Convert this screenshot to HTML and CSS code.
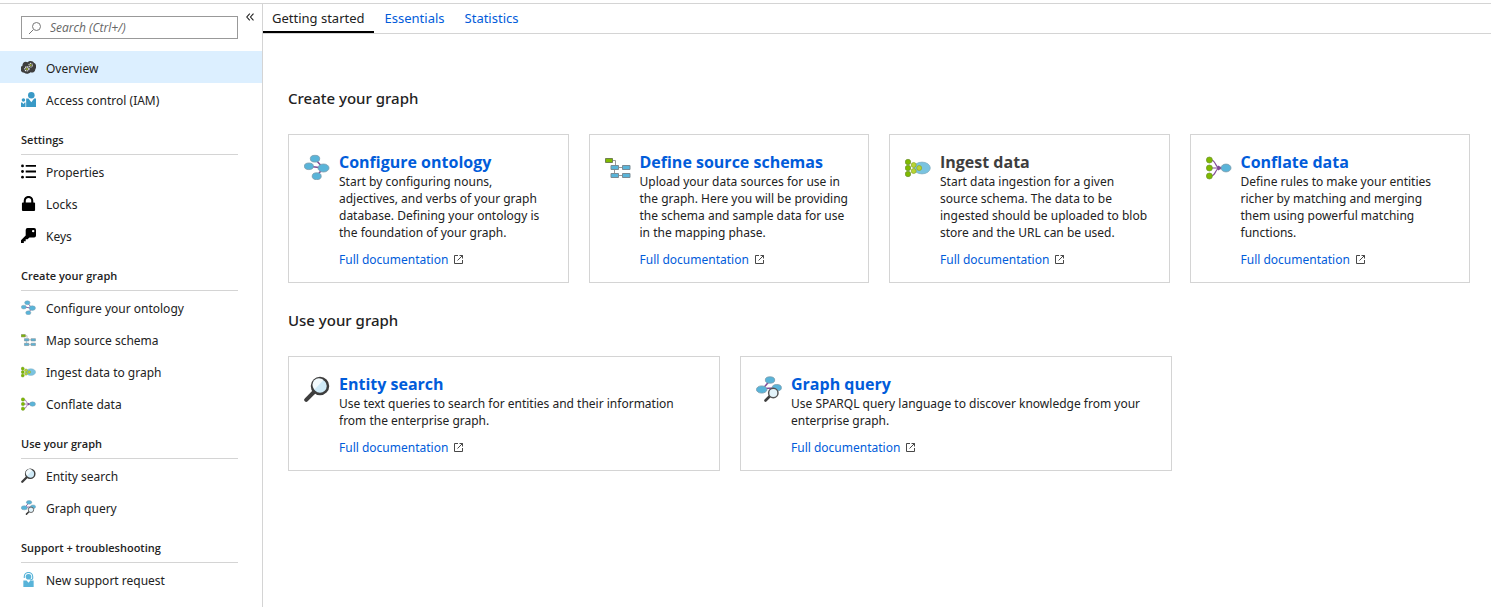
FILE: index.html
```html
<!DOCTYPE html>
<html lang="en">
<head>
<meta charset="utf-8">
<title>Getting started</title>
<link rel="stylesheet" href="styles.css">
</head>
<body>
<svg class="sprite" aria-hidden="true">
  <symbol id="ontology" viewBox="0 0 26 26">
    <path d="M11 5 19.300 14 12.700 22M5 12.300 19 14" fill="none" stroke="#804998" stroke-width="1.500"/>
    <g fill="#59b4d9" stroke="#7a9bab" stroke-width=".8"><ellipse cx="11" cy="4.700" rx="4.700" ry="3.400"/><ellipse cx="4.900" cy="12.300" rx="4.500" ry="3.300"/><ellipse cx="19.500" cy="14" rx="5.500" ry="4"/><ellipse cx="12.700" cy="22.200" rx="4.500" ry="3.400"/></g>
  </symbol>
  <symbol id="schema" viewBox="0 0 26 26">
    <path d="M8 6.500h2.500V11M9.500 16v3M13 13.500h5M13 21.500h5" fill="none" stroke="#999"/>
    <path d="M.5 4.500h7v4h-7z" fill="#7fba00" stroke="#708050"/>
    <path d="M6 11.500h7.500v4H6zM17.500 11.500H25v4h-7.500zM6 19.500h7.500v4H6zM17.500 19.500H25v4h-7.500z" fill="#59b4d9" stroke="#7a8b94"/>
  </symbol>
  <symbol id="ingest" viewBox="0 0 26 26">
    <ellipse cx="17" cy="14" rx="8.300" ry="5.900" fill="#79c3e0" stroke="#7daabf" stroke-width=".7"/>
    <g fill="#b8d432" stroke="#8aa62c" stroke-width=".7"><circle cx="8.700" cy="11" r="2.500"/><circle cx="8.700" cy="17" r="2.500"/><circle cx="14.200" cy="14" r="2.500"/></g>
    <g fill="#7fba00" stroke="#6d9230" stroke-width=".7"><circle cx="3" cy="8" r="2.700"/><circle cx="3" cy="14" r="2.700"/><circle cx="3" cy="20" r="2.700"/></g>
  </symbol>
  <symbol id="conflate" viewBox="0 0 26 26">
    <path d="M5 6c5 0 4 8 9 8M5 22c5 0 4-8 9-8M5 14h11" fill="none" stroke="#804998" stroke-width="1.200"/>
    <path d="M12 11.500 17 14l-5 2.500z" fill="#804998"/>
    <ellipse cx="20" cy="14" rx="5" ry="3.900" fill="#59b4d9" stroke="#7a9bab" stroke-width=".8"/>
    <g fill="#7fba00" stroke="#6d9230" stroke-width=".7"><circle cx="3.400" cy="6" r="3"/><circle cx="3.400" cy="14" r="3"/><circle cx="3.400" cy="22" r="3"/></g>
  </symbol>
  <symbol id="lens" viewBox="0 0 26 26">
    <path d="M2.200 23.800 10 16" stroke="#3e3e3e" stroke-width="4" stroke-linecap="round"/>
    <circle cx="16" cy="10" r="8" fill="#cfeaf7" stroke="#3e3e3e" stroke-width="2.500"/>
    <path d="M10.500 13.500a6.500 6.500 0 0 1 9-9.500z" fill="#f2fafd"/>
  </symbol>
  <symbol id="query" viewBox="0 0 26 26">
    <path d="M14 4.500 7 12.500 20 12" fill="none" stroke="#804998" stroke-width="1.500"/>
    <g fill="#59b4d9" stroke="#7a9bab" stroke-width=".8"><ellipse cx="14" cy="4" rx="4.700" ry="3.200"/><ellipse cx="5.700" cy="13.500" rx="5.300" ry="3.600"/><ellipse cx="20.800" cy="11.700" rx="4.600" ry="3.200"/></g>
    <path d="m9.500 24.500 4.500-4.500" stroke="#3e3e3e" stroke-width="2.600" stroke-linecap="round"/>
    <circle cx="17.300" cy="17" r="4.700" fill="#e3f3fa" stroke="#555" stroke-width="1.500"/>
  </symbol>
  <symbol id="overview" viewBox="0 0 16 16">
    <path d="M3.500 13.500A4 4 0 0 1 1.500 6C1.500 2.500 4.500 1 7 2.500c2-2.300 6-1.800 7 .7 2.500.8 2.800 4.800 1.200 6.800-.3 3-3 4-5.200 3-1.500 2-5 2-6.500.5z" fill="#3e3e3e"/>
    <circle cx="10.300" cy="5.500" r="1.900" fill="none" stroke="#e4e4e4" stroke-width="1.100" stroke-dasharray="1.200 .6"/><circle cx="6.300" cy="9.500" r="2.200" fill="none" stroke="#fff" stroke-width="1.200" stroke-dasharray="1.300 .6"/>
    <circle cx="10.300" cy="5.500" r="1" fill="#98ac2b"/><circle cx="6.300" cy="9.500" r="1.100" fill="#98ac2b"/>
  </symbol>
  <symbol id="people" viewBox="0 0 16 16">
    <g fill="#3999c6"><circle cx="11" cy="3.500" r="3.500"/><path d="M5.500 7H8l3 4 3-4h2v9H5.500z"/><circle cx="2.600" cy="8.500" r="1.900"/><path d="M0 11.200h1.300l1.300 1.500 1.300-1.500h.9V16H0z"/></g>
  </symbol>
  <symbol id="list" viewBox="0 0 16 16">
    <path d="M5 2h11M5 8h11M5 14h11" stroke="#000" stroke-width="2"/><circle cx="1.600" cy="2" r="1.500"/><circle cx="1.600" cy="8" r="1.500"/><circle cx="1.600" cy="14" r="1.500"/>
  </symbol>
  <symbol id="lock" viewBox="0 0 16 16">
    <path d="M4 8V5a4 4 0 0 1 8 0v3" fill="none" stroke="#000" stroke-width="2.200"/><rect x="1" y="7" width="14" height="9" rx="1"/>
  </symbol>
  <symbol id="key" viewBox="0 0 16 16">
    <path fill-rule="evenodd" d="M7 0h7a2 2 0 0 1 2 2v6a2 2 0 0 1-2 2H9l-2 2H5v2H3v2H0v-3l5-5V2a2 2 0 0 1 2-2zm6 2a1.300 1.300 0 1 0 0 2.600A1.300 1.300 0 0 0 13 2z"/>
  </symbol>
  <symbol id="support" viewBox="0 0 16 16">
    <path d="M3.500 6.500V5A4.500 4.500 0 0 1 12.500 5v1.500c0 1-1 2-3 2" fill="none" stroke="#59b4d9" stroke-width="1.200"/>
    <circle cx="8" cy="5" r="3" fill="#59b4d9"/><path d="M2.500 9H6l2 2.500L10 9h3.500v7h-11z" fill="#59b4d9"/>
  </symbol>
  <symbol id="external" viewBox="0 0 9 9">
    <path d="M4 .5H.5v8h8V5M5.500 .5h3v3M8.500.5l-5 5" fill="none" stroke="#333" stroke-width=".9"/>
  </symbol>
</svg>
<div class="app">
  <aside class="sidebar">
    <div class="search-row">
      <label class="search">
        <svg class="search-icon" viewBox="0 0 14 14" aria-hidden="true"><path d="M1 13 5 9" stroke="#777"/><circle cx="8.500" cy="5.500" r="4" fill="none" stroke="#777"/></svg>
        <input class="search-input" type="text" placeholder="Search (Ctrl+/)" aria-label="Search">
      </label>
      <button class="collapse" type="button" aria-label="Collapse menu"><svg class="chevrons" viewBox="0 0 8 8" aria-hidden="true"><path d="M3.800.7.800 4l3 3.300M7.500.7 4.500 4l3 3.300" fill="none" stroke="#222" stroke-width="1.100"/></svg></button>
    </div>
    <nav>
      <a class="item selected" href="#"><svg class="icon"><use href="#overview"/></svg>Overview</a>
      <a class="item" href="#"><svg class="icon"><use href="#people"/></svg>Access control (IAM)</a>
      <h2 class="group">Settings</h2>
      <a class="item" href="#"><svg class="icon"><use href="#list"/></svg>Properties</a>
      <a class="item" href="#"><svg class="icon"><use href="#lock"/></svg>Locks</a>
      <a class="item" href="#"><svg class="icon"><use href="#key"/></svg>Keys</a>
      <h2 class="group">Create your graph</h2>
      <a class="item" href="#"><svg class="icon"><use href="#ontology"/></svg>Configure your ontology</a>
      <a class="item" href="#"><svg class="icon"><use href="#schema"/></svg>Map source schema</a>
      <a class="item" href="#"><svg class="icon"><use href="#ingest"/></svg>Ingest data to graph</a>
      <a class="item" href="#"><svg class="icon"><use href="#conflate"/></svg>Conflate data</a>
      <h2 class="group">Use your graph</h2>
      <a class="item" href="#"><svg class="icon"><use href="#lens"/></svg>Entity search</a>
      <a class="item" href="#"><svg class="icon"><use href="#query"/></svg>Graph query</a>
      <h2 class="group">Support + troubleshooting</h2>
      <a class="item" href="#"><svg class="icon"><use href="#support"/></svg>New support request</a>
    </nav>
  </aside>
  <main class="main">
    <div class="tabs">
      <button class="tab active" type="button">Getting started</button>
      <button class="tab" type="button">Essentials</button>
      <button class="tab" type="button">Statistics</button>
    </div>
    <div class="content">
      <section class="section">
        <h2 class="section-title">Create your graph</h2>
        <div class="cards four">
          <article class="card">
            <svg class="card-icon"><use href="#ontology"/></svg>
            <div class="card-body">
              <h3 class="card-title"><a href="#">Configure ontology</a></h3>
              <p class="text">Start by configuring nouns, adjectives, and verbs of your graph database. Defining your ontology is the foundation of your graph.</p>
              <a class="doc" href="#">Full documentation<svg class="ext"><use href="#external"/></svg></a>
            </div>
          </article>
          <article class="card">
            <svg class="card-icon"><use href="#schema"/></svg>
            <div class="card-body">
              <h3 class="card-title"><a href="#">Define source schemas</a></h3>
              <p class="text">Upload your data sources for use in the graph. Here you will be providing the schema and sample data for use in the mapping phase.</p>
              <a class="doc" href="#">Full documentation<svg class="ext"><use href="#external"/></svg></a>
            </div>
          </article>
          <article class="card">
            <svg class="card-icon"><use href="#ingest"/></svg>
            <div class="card-body">
              <h3 class="card-title">Ingest data</h3>
              <p class="text">Start data ingestion for a given source schema. The data to be ingested should be uploaded to blob store and the URL can be used.</p>
              <a class="doc" href="#">Full documentation<svg class="ext"><use href="#external"/></svg></a>
            </div>
          </article>
          <article class="card">
            <svg class="card-icon"><use href="#conflate"/></svg>
            <div class="card-body">
              <h3 class="card-title"><a href="#">Conflate data</a></h3>
              <p class="text">Define rules to make your entities richer by matching and merging them using powerful matching functions.</p>
              <a class="doc" href="#">Full documentation<svg class="ext"><use href="#external"/></svg></a>
            </div>
          </article>
        </div>
      </section>
      <section class="section">
        <h2 class="section-title">Use your graph</h2>
        <div class="cards two">
          <article class="card">
            <svg class="card-icon"><use href="#lens"/></svg>
            <div class="card-body">
              <h3 class="card-title"><a href="#">Entity search</a></h3>
              <p class="text">Use text queries to search for entities and their information from the enterprise graph.</p>
              <a class="doc" href="#">Full documentation<svg class="ext"><use href="#external"/></svg></a>
            </div>
          </article>
          <article class="card">
            <svg class="card-icon"><use href="#query"/></svg>
            <div class="card-body">
              <h3 class="card-title"><a href="#">Graph query</a></h3>
              <p class="text">Use SPARQL query language to discover knowledge from your enterprise graph.</p>
              <a class="doc" href="#">Full documentation<svg class="ext"><use href="#external"/></svg></a>
            </div>
          </article>
        </div>
      </section>
    </div>
  </main>
</div>
</body>
</html>
```
FILE: styles.css
```css
* { box-sizing: border-box; }
body {
  margin: 0;
  padding-top: 3px;
  background: #fff;
  color: #222;
  font: 12px/17px "Noto Sans", "Open Sans", sans-serif;
}
h2, h3, p { margin: 0; }
a { color: #015cda; text-decoration: none; }
button { border: 0; background: none; font: inherit; cursor: pointer; }
.sprite { position: absolute; width: 0; height: 0; }
.app {
  display: flex;
  min-height: calc(100vh - 3px);
  border-top: 1px solid #d4d4d4;
}

.sidebar {
  flex: 0 0 263px;
  border-right: 1px solid #d4d4d4;
}
.search-row {
  display: flex;
  align-items: flex-start;
  gap: 8px;
  padding: 9px 8px 12px 21px;
}
.search {
  flex: 1;
  display: flex;
  align-items: center;
  gap: 8px;
  height: 23px;
  margin-top: 3px;
  padding: 0 6px;
  border: 1px solid #999;
}
.search-icon { width: 14px; height: 14px; }
.search-input {
  flex: 1;
  min-width: 0;
  padding: 0;
  border: 0;
  outline: 0;
  background: none;
  font: 12px "Open Sans", "Noto Sans", sans-serif;
}
.search-input::placeholder { color: #666; font-style: italic; opacity: 1; }
.collapse { display: flex; padding: 0; }
.chevrons { width: 8px; height: 8px; }

.item {
  display: flex;
  align-items: center;
  gap: 10px;
  height: 32px;
  padding: 2px 21px 0;
  color: #222;
}
.selected { background: #dcefff; }
.icon { width: 15px; height: 15px; margin-bottom: 1px; }
.group {
  height: 40px;
  margin: 0 24px 0 21px;
  padding-top: 16px;
  border-bottom: 1px solid #d4d4d4;
  font-family: "Open Sans", "Noto Sans", sans-serif;
  font-size: 11px;
  font-weight: 600;
}

.main { flex: 1; min-width: 0; }
.tabs {
  display: flex;
  gap: 2px;
  height: 30px;
  border-bottom: 1px solid #d4d4d4;
}
.tab {
  padding: 2px 9px 0;
  border-bottom: 2px solid transparent;
  color: #015cda;
  font-size: 13px;
}
.active { border-color: #000; color: #222; }
.content { padding: 53px 21px 24px 25px; }
.section { margin-bottom: 26px; }
.section-title {
  margin-bottom: 24px;
  font-size: 15px;
  line-height: 23px;
  font-weight: 500;
}
.cards { display: grid; gap: 20px; }
.four { grid-template-columns: repeat(4, minmax(0, 1fr)); }
.two { grid-template-columns: repeat(2, minmax(0, 432px)); }
.card {
  display: flex;
  gap: 9px;
  padding: 17px 15px 14px;
  border: 1px solid #d4d4d4;
}
.card-icon { flex: none; width: 26px; height: 26px; margin-top: 2px; }
.card-body { flex: 1; min-width: 0; }
.card-title {
  color: #3e3e3e;
  font: 700 16px/21px "Open Sans", "Noto Sans", sans-serif;
}
.text { margin-bottom: 10px; }
.doc { display: flex; align-items: center; gap: 6px; }
.ext { width: 9px; height: 9px; }
```
